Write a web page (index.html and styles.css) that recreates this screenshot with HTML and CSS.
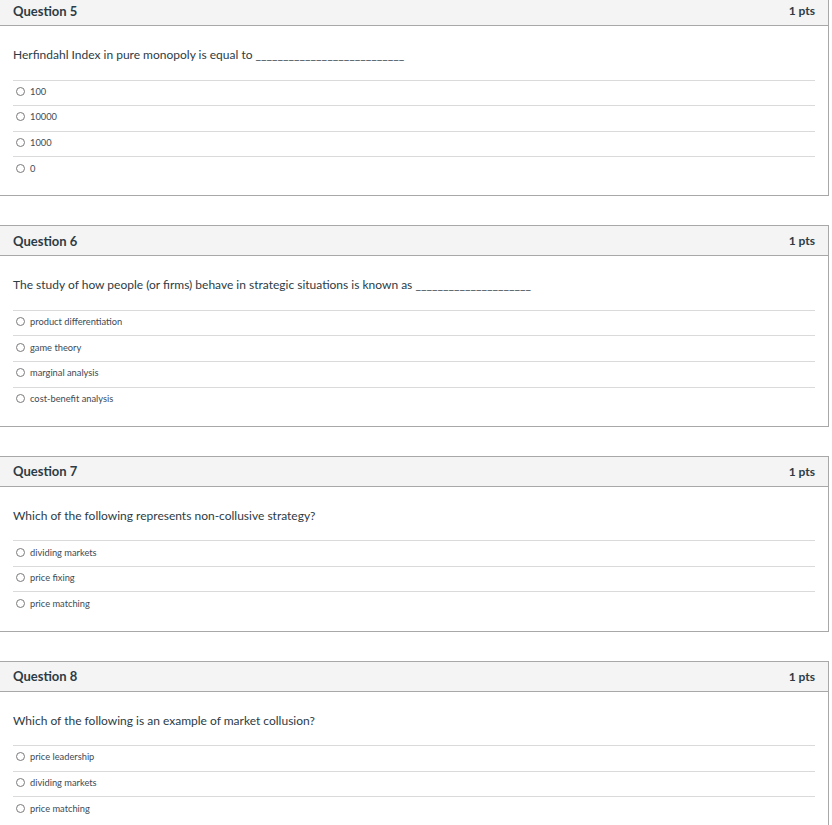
FILE: index.html
```html
<!DOCTYPE html>
<html>
<head>
<meta charset="utf-8">
<link rel="stylesheet" href="styles.css">
</head>
<body>
<div class="page">
  <div class="question first">
    <div class="q-header"><span class="q-title">Question 5</span><span class="q-pts">1 pts</span></div>
    <div class="q-body">
      <div class="q-text">Herfindahl Index in pure monopoly is equal to ___________________________</div>
      <div class="answers">
        <div class="answer"><span class="radio"></span><span class="label">100</span></div>
        <div class="answer"><span class="radio"></span><span class="label">10000</span></div>
        <div class="answer"><span class="radio"></span><span class="label">1000</span></div>
        <div class="answer"><span class="radio"></span><span class="label">0</span></div>
      </div>
    </div>
  </div>
  <div class="question">
    <div class="q-header"><span class="q-title">Question 6</span><span class="q-pts">1 pts</span></div>
    <div class="q-body">
      <div class="q-text">The study of how people (or firms) behave in strategic situations is known as _____________________</div>
      <div class="answers">
        <div class="answer"><span class="radio"></span><span class="label">product differentiation</span></div>
        <div class="answer"><span class="radio"></span><span class="label">game theory</span></div>
        <div class="answer"><span class="radio"></span><span class="label">marginal analysis</span></div>
        <div class="answer"><span class="radio"></span><span class="label">cost-benefit analysis</span></div>
      </div>
    </div>
  </div>
  <div class="question">
    <div class="q-header"><span class="q-title">Question 7</span><span class="q-pts">1 pts</span></div>
    <div class="q-body">
      <div class="q-text">Which of the following represents non-collusive strategy?</div>
      <div class="answers">
        <div class="answer"><span class="radio"></span><span class="label">dividing markets</span></div>
        <div class="answer"><span class="radio"></span><span class="label">price fixing</span></div>
        <div class="answer"><span class="radio"></span><span class="label">price matching</span></div>
      </div>
    </div>
  </div>
  <div class="question">
    <div class="q-header"><span class="q-title">Question 8</span><span class="q-pts">1 pts</span></div>
    <div class="q-body">
      <div class="q-text">Which of the following is an example of market collusion?</div>
      <div class="answers">
        <div class="answer"><span class="radio"></span><span class="label">price leadership</span></div>
        <div class="answer"><span class="radio"></span><span class="label">dividing markets</span></div>
        <div class="answer"><span class="radio"></span><span class="label">price matching</span></div>
      </div>
    </div>
  </div>
</div>
</body>
</html>
```
FILE: styles.css
```css
html, body {
  margin: 0;
  padding: 0;
  background: #fff;
}
body {
  font-family: Lato, "Liberation Sans", sans-serif;
  color: #2d3b45;
  overflow: hidden;
}
.page {
  display: flex;
  flex-direction: column;
  gap: 29px;
  margin-left: -1px;
  width: 830px;
}
.question {
  border: 1px solid #a8a8a8;
  box-sizing: border-box;
}
.question.first {
  margin-top: -5px;
}
.q-header {
  display: flex;
  justify-content: space-between;
  align-items: center;
  height: 29px;
  background: #f4f4f4;
  border-bottom: 1px solid #a8a8a8;
  padding: 0 13px 0 13px;
  font-weight: bold;
  color: #2d3b45;
}
.q-title {
  font-size: 13px;
}
.q-pts {
  font-size: 12px;
}
.q-body {
  padding: 21px 13px 13.5px 13px;
}
.q-text {
  font-size: 12px;
  line-height: 15px;
  margin-bottom: 17.5px;
}
.answer {
  display: flex;
  align-items: center;
  box-sizing: border-box;
  height: 25.6px;
  padding-bottom: 3px;
  border-top: 1px solid #dadada;
}
.radio {
  box-sizing: border-box;
  width: 9px;
  height: 9px;
  border: 1px solid #7a7a7a;
  border-radius: 50%;
  margin-left: 3px;
  margin-right: 5px;
}
.label {
  font-size: 9.3px;
  color: #3b4a55;
}
```
